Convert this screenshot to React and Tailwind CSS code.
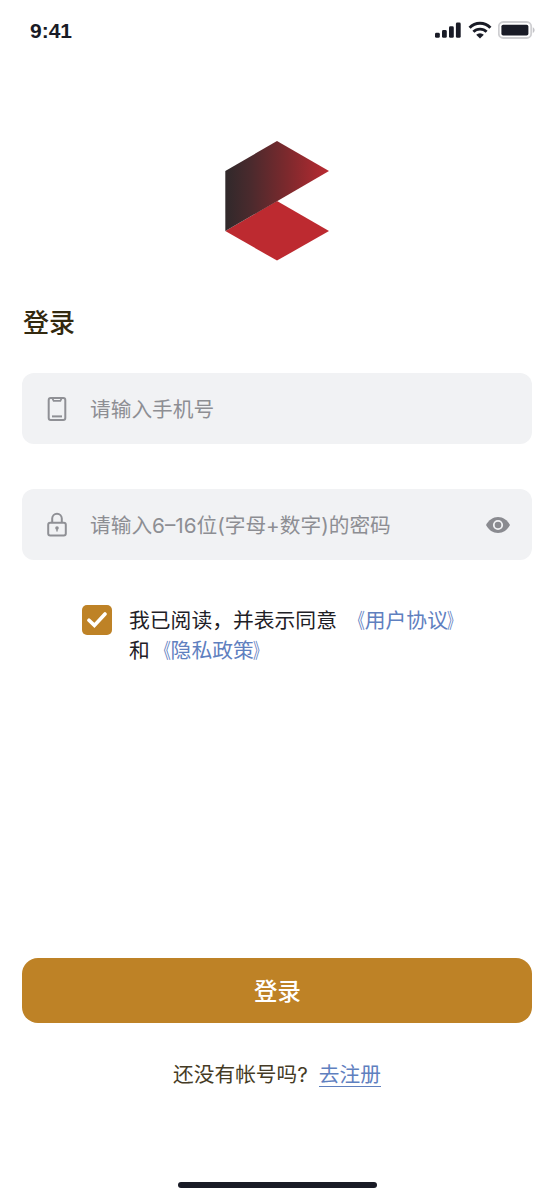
import React, { useState } from 'react';

const SignalIcon = () => (
  <svg width="28" height="18" viewBox="0 0 28 18" fill="#191b26">
    <rect x="1" y="11.8" width="4.8" height="5" rx="1.4" />
    <rect x="8" y="9" width="4.8" height="7.8" rx="1.4" />
    <rect x="15" y="5.3" width="4.8" height="11.5" rx="1.4" />
    <rect x="21.9" y="1.6" width="4.8" height="15.2" rx="1.4" />
  </svg>
);

const WifiIcon = () => (
  <svg width="24" height="18" viewBox="0 0 24 18" fill="none" stroke="#191b26">
    <path d="M1.6 6.7a14.6 14.6 0 0 1 20.8 0" strokeWidth="3" />
    <path d="M5.4 10.8a9.3 9.3 0 0 1 13.2 0" strokeWidth="2.8" />
    <path d="M8.2 13.8a5.4 5.4 0 0 1 7.6 0L12 17.6z" fill="#191b26" stroke="none" />
  </svg>
);

const BatteryIcon = () => (
  <svg width="38" height="18" viewBox="0 0 38 18">
    <rect x="0.8" y="1" width="32.4" height="16" rx="4.4" fill="none" stroke="#cfcfd2" strokeWidth="1.8" />
    <rect x="3.4" y="3.7" width="27" height="10.8" rx="1.8" fill="#191b26" />
    <path d="M34.8 6.2c2.4 1 2.4 4.8 0 5.8z" fill="#c4c4c8" />
  </svg>
);

const Logo = () => (
  <svg width="104" height="120" viewBox="0 0 104 120">
    <defs>
      <linearGradient id="fold" x1="0" y1="0" x2="1" y2="0">
        <stop offset="0" stopColor="#30292b" />
        <stop offset="0.25" stopColor="#4b2a2d" />
        <stop offset="0.6" stopColor="#7d292d" />
        <stop offset="1" stopColor="#b92a31" />
      </linearGradient>
    </defs>
    <path d="M0.3 90 52 60l52 30L52 119.6z" fill="#bd2a30" />
    <path d="M0.3 30 52 0l52 30-52 30.2L0.3 90z" fill="url(#fold)" />
  </svg>
);

const PhoneIcon = () => (
  <svg width="20" height="26" viewBox="0 0 20 26" fill="none" stroke="#8f9095" strokeWidth="2">
    <rect x="1.7" y="1.9" width="16.6" height="22.2" rx="2" />
    <path d="M5.4 2.4 6.6 4.8h6.8l1.2-2.4" strokeWidth="1.7" />
    <path d="M5 20.4h10" strokeWidth="2" />
  </svg>
);

const LockIcon = () => (
  <svg width="20" height="26" viewBox="0 0 20 26" fill="none" stroke="#8f9095" strokeWidth="2">
    <rect x="1.2" y="10.8" width="17.6" height="12.8" rx="2" />
    <path d="M5.2 10.8V6.6a4.8 4.8 0 0 1 9.6 0v4.2" />
    <circle cx="10" cy="16" r="1.8" fill="#8f9095" stroke="none" />
    <path d="M10 16v3.6" strokeWidth="1.5" />
  </svg>
);

const EyeIcon = () => (
  <svg width="24" height="16" viewBox="0 0 24 16">
    <path d="M0 8C2.6 3 7 0 12 0s9.4 3 12 8c-2.6 5-7 8-12 8S2.6 13 0 8z" fill="#8a8b90" />
    <circle cx="12" cy="8" r="4.2" fill="none" stroke="#f1f2f4" strokeWidth="1.8" />
  </svg>
);

const Field = ({ icon, text, children }) => (
  <div className="flex h-[71px] items-center rounded-xl bg-[#f1f2f4] pl-[24.5px] pr-[22px]">
    <span className="flex w-5 justify-center">{icon}</span>
    <span className="ml-[23.5px] flex-1 whitespace-nowrap pt-[3px] text-[20.7px] text-[#8d8e93]">{text}</span>
    {children}
  </div>
);

// Book title marks are drawn narrower than the full-width glyphs
const DocLink = ({ children }) => (
  <a className="text-[#5f80bf]">
    <span className="-ml-0.5 mr-0.5 inline-block origin-right scale-x-[0.7]">《</span>
    <span className="-ml-0.5">{children}</span>
    <span className="-ml-px inline-block origin-left scale-x-[0.65]">》</span>
  </a>
);

export default function App() {
  const [agreed, setAgreed] = useState(true);

  return (
    <div className="flex h-[1202px] w-[554px] flex-col overflow-hidden bg-white font-['Inter','Noto_Sans_CJK_SC',sans-serif]">
      {/* Status bar */}
      <header className="flex h-[61px] items-center justify-between pb-px pl-[30px] pr-[18.5px]">
        <span className="font-['Liberation_Sans',sans-serif] text-[21px] font-bold leading-none text-[#191b26]">9:41</span>
        <div className="flex items-center gap-1.5">
          <SignalIcon />
          <WifiIcon />
          <BatteryIcon />
        </div>
      </header>

      <div className="mt-20 flex justify-center">
        <Logo />
      </div>

      <main className="flex flex-1 flex-col px-[22px]">
        <h1 className="mt-[43px] pl-px text-[26px] font-medium leading-[38px] text-[#33290f]">登录</h1>

        <div className="mt-[31px] flex flex-col gap-[45px]">
          <Field icon={<PhoneIcon />} text="请输入手机号" />
          <Field icon={<LockIcon />} text="请输入6–16位(字母+数字)的密码">
            <EyeIcon />
          </Field>
        </div>

        {/* Agreement */}
        <div className="mt-[45px] flex items-start pl-[60px]">
          <button
            type="button"
            onClick={() => setAgreed(!agreed)}
            className="flex size-[30px] items-center justify-center rounded-[5px] bg-[#be8226]"
          >
            {agreed && (
              <svg width="20" height="16" viewBox="0 0 20 16" fill="none" stroke="#fff" strokeWidth="3.6">
                <path d="m2 8.2 5.400 5.200L18 2" strokeLinecap="round" />
              </svg>
            )}
          </button>
          <p className="ml-[17px] whitespace-nowrap pt-px text-[20.8px] leading-[29.5px] text-[#1e2026]">
            <span className="mr-[9px]">我已阅读，并表示同意</span>
            <DocLink>用户协议</DocLink>
            <br />
            <span className="mr-0.5">和</span>
            <DocLink>隐私政策</DocLink>
          </p>
        </div>

        <button type="button" className="mt-auto h-[65px] rounded-2xl bg-[#be8226] pl-px pt-0.5 text-[23.4px] font-medium text-white">
          登录
        </button>

        <p className="mt-[37px] flex justify-center whitespace-nowrap text-[20.7px] leading-[30px] text-[#453b25]">
          <span>还没有帐号吗?</span>
          <a className="ml-[11px] h-[27px] border-b border-[#5f80bf] text-[#5f80bf]">去注册</a>
        </p>
      </main>

      {/* Home indicator */}
      <footer className="mt-[92px] flex h-5 shrink-0 justify-center">
        <div className="h-1.5 w-[199px] rounded-full bg-[#191b26]" />
      </footer>
    </div>
  );
}
